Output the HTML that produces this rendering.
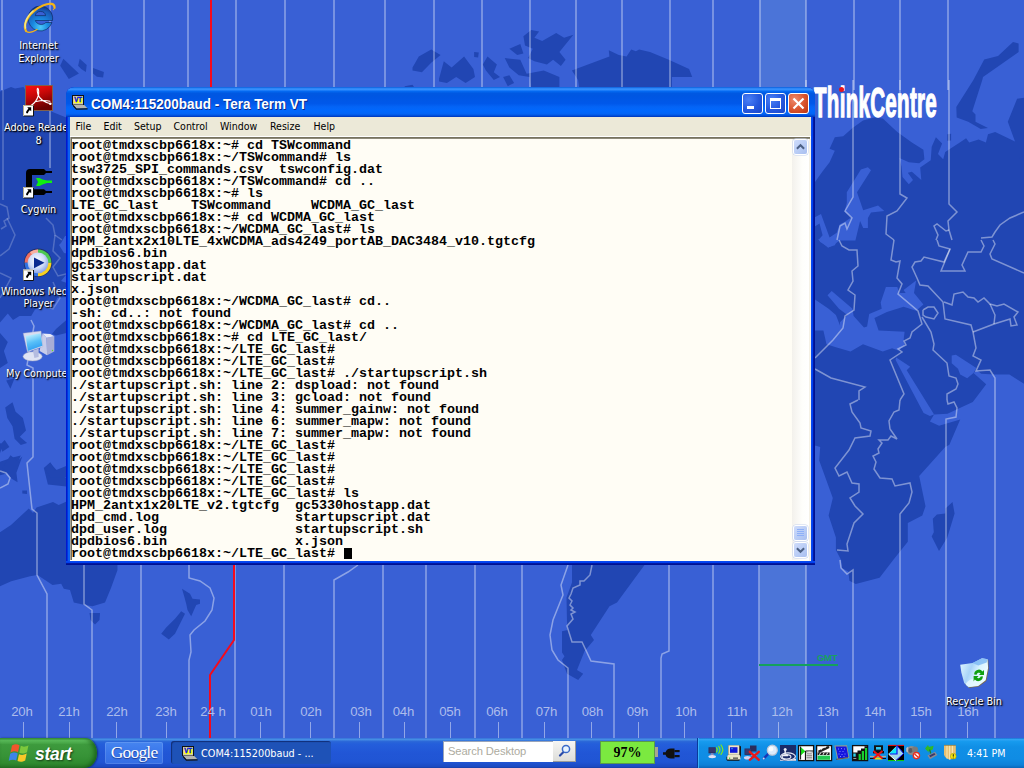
<!DOCTYPE html>
<html lang="en"><head><meta charset="utf-8"><title>COM4:115200baud - Tera Term VT</title>
<style>
html,body{margin:0;padding:0}
body{width:1024px;height:768px;overflow:hidden;position:relative;background:#3960d5;font-family:"Liberation Sans","DejaVu Sans",sans-serif;font-size:11px}
#wall{position:absolute;left:0;top:0}
.abs{position:absolute}
/* hour labels */
.hr{position:absolute;top:703px;width:40px;text-align:center;font-size:13.2px;color:#adbcec;line-height:18px;letter-spacing:-0.1px}
.tick{position:absolute;top:722px;width:1px;height:16px;background:rgba(255,255,255,.45)}
#gmt{position:absolute;left:759px;top:664px;width:79px;height:2px;background:#14a05c}
#gmtt{position:absolute;left:817px;top:652px;font-size:9.5px;font-weight:bold;color:#18a060;line-height:12px;letter-spacing:-.3px}
/* desktop icons */
.dlabel{position:absolute;width:90px;text-align:center;color:#fff;font-family:"DejaVu Sans Condensed","Liberation Sans",sans-serif;font-size:10.8px;line-height:13px;text-shadow:1px 1px 1px #000,1px 1px 2px rgba(0,0,0,.8);white-space:nowrap}
/* logo */
#logo{position:absolute;left:814px;top:78px;color:#fff;font-weight:bold;font-size:43px;line-height:48px;transform-origin:0 0;transform:scaleX(.478);letter-spacing:.6px;-webkit-text-stroke:1.4px #fff;white-space:nowrap}
#logodot{position:absolute;left:839px;top:87px;width:5px;height:5px;border-radius:3px;background:#e8141c}
/* window */
#win{position:absolute;left:66px;top:87px;width:749px;height:478px;background:#0a3cd8;border-radius:8px 8px 0 0;overflow:hidden}
#title{position:absolute;left:0;top:0;width:749px;height:30px;background:linear-gradient(#0a5ad6 0,#1e78f0 3%,#3c96ff 7%,#2080fa 11%,#0468f0 15%,#0058e2 21%,#0056e2 30%,#0058ea 55%,#0464f6 66%,#0068fe 80%,#0464f4 90%,#0050dc 95%,#0034b8 100%);border-radius:8px 8px 0 0}
#ttext{position:absolute;left:25px;top:8px;color:#fff;font-weight:bold;font-size:14.5px;line-height:18px;text-shadow:1px 1px 0 #0a2a8c;white-space:nowrap;transform-origin:0 0;transform:scaleX(.93)}
.tb{position:absolute;top:6px;width:21px;height:21px;border-radius:3px;box-sizing:border-box;border:1px solid #fff}
.tb.b{background:radial-gradient(circle at 30% 30%,#4a7ff6 0,#2558de 55%,#1c47c8 100%)}
.tb.r{background:radial-gradient(circle at 30% 30%,#ee8a6c 0,#d9532c 55%,#bb3310 100%)}
#lb,#rb,#bb{position:absolute}
#lb{background:linear-gradient(90deg,#0019cf 0,#0019cf 30%,#0a5ff0 50%,#0a5ff0 100%)}
#rb{background:linear-gradient(90deg,#0a50f0 0,#003cf0 45%,#001496 65%,#001090 100%)}
#lb{left:0;top:30px;width:4px;height:448px}
#rb{left:745px;top:30px;width:4px;height:448px}
#bb{left:0;top:474px;width:749px;height:4px;background:linear-gradient(#0a50f0 0,#003cf0 45%,#001496 65%,#001090 100%)}
#menu{position:absolute;left:4px;top:30px;width:741px;height:19px;background:#ece9d8}
#menu span{position:absolute;top:3px;font-family:"DejaVu Sans Condensed","Liberation Sans",sans-serif;font-size:10.5px;line-height:13px;color:#000}
#client{position:absolute;left:4px;top:49px;width:741px;height:425px;background:#fffdf5}
#sunk{position:absolute;left:4px;top:49px;width:740px;height:3px;background:linear-gradient(#fff 0,#fff 33.300%,#77735f 33.300%,#77735f 66.600%,#8e8a7a 66.600%,#8e8a7a 100%)}
#sunkl{position:absolute;left:4px;top:50px;width:2px;height:423px;background:linear-gradient(90deg,#aca899 0,#aca899 50%,#716f64 50%,#716f64 100%)}
#term{position:absolute;left:5px;top:53px;font-family:"Liberation Mono","DejaVu Sans Mono",monospace;font-weight:bold;font-size:13.33px;line-height:12px;color:#000;white-space:pre}
.tl{height:12px;white-space:pre}
.cur{display:inline-block;width:8px;height:11px;background:#000;vertical-align:top;margin-top:0;margin-left:1px}
#sb{position:absolute;left:726px;top:52px;width:17px;height:421px;background:linear-gradient(90deg,#f3f1ec,#fefefb 60%,#fff)}
#sbr{position:absolute;left:743px;top:52px;width:2px;height:422px;background:#f5f1e6}
.sbtn{position:absolute;left:2px;width:13px;height:14px;border-radius:2px;background:linear-gradient(135deg,#cfdcfb,#b7cbf5 60%,#a9bff0);box-shadow:0 0 0 1px #fff, 0 0 0 1.5px #c5d2ee}
/* taskbar */
#task{position:absolute;left:0;top:738px;width:1024px;height:30px;background:linear-gradient(#3168d5 0,#4993e6 4%,#2a66d8 12%,#245edb 20%,#2156d6 50%,#2055d4 80%,#1c4ac2 95%,#173ea5 100%)}
#start{position:absolute;left:0;top:0;width:97px;height:30px;border-radius:0 12px 12px 0/0 15px 15px 0;background:linear-gradient(#3f9d3f 0,#5cbf5c 8%,#3d9a3d 22%,#379337 60%,#2f8a2f 85%,#2a7a2a 100%);box-shadow:inset -3px 0 4px rgba(0,60,0,.5), 1px 0 2px rgba(0,0,40,.5)}
#starttxt{position:absolute;left:35px;top:4px;color:#fff;font-style:italic;font-weight:bold;font-size:17.5px;line-height:24px;text-shadow:1px 1px 2px rgba(0,0,0,.6);letter-spacing:-.3px}
#goog{position:absolute;left:105px;top:4px;width:58px;height:22px;border-radius:2px;background:linear-gradient(#4685f0,#3a76ea 50%,#356ee4);box-shadow:inset 0 0 0 1px rgba(255,255,255,.12)}
#goog span{position:absolute;left:0;top:0;width:58px;text-align:center;color:#fff;font-family:"Liberation Serif","DejaVu Serif",serif;font-size:17.5px;line-height:21px;letter-spacing:-.8px;text-shadow:0 1px 1px rgba(0,0,60,.5)}
#tbtn{position:absolute;left:171px;top:3px;width:160px;height:23px;border-radius:3px;background:#1e52b7;box-shadow:inset 1px 1px 1px rgba(0,0,40,.45)}
#tbtn span{position:absolute;left:30px;top:6px;color:#fff;font-family:"DejaVu Sans Condensed","Liberation Sans",sans-serif;font-size:10.8px;line-height:13px;white-space:nowrap}
#srch{position:absolute;left:443px;top:3px;width:110px;height:21px;background:#fff;box-shadow:inset 1px 1px 0 #9aa4b8}
#srch span{position:absolute;left:5px;top:3px;color:#adaba0;font-size:11.2px;line-height:14px;letter-spacing:-.1px}
#sbut{position:absolute;left:553px;top:3px;width:23px;height:21px;background:linear-gradient(#f6f6f4,#dcdcd8);box-shadow:inset -1px -1px 0 #9a9a98}
#batt{position:absolute;left:600px;top:3px;width:55px;height:23px;background:#7be940;box-shadow:inset 0 0 0 1px #5a9a4a}
#batt span{position:absolute;left:0;top:2px;width:55px;text-align:center;color:#000;font-family:"Liberation Serif",serif;font-weight:bold;font-size:14px;line-height:19px}
#bnub{position:absolute;left:655px;top:9px;width:3px;height:10px;background:#a8a690}
#tray{position:absolute;left:697px;top:0;width:327px;height:30px;background:linear-gradient(#1a6fd2 0,#2ea4f4 5%,#169aee 12%,#108fe6 30%,#0f8ce4 70%,#0d80d8 90%,#0a66b8 100%);box-shadow:inset 1px 0 0 #0a3a9a, inset 2px 0 0 #3ab0f8}
#clock{position:absolute;left:270px;top:9px;color:#fff;font-family:"DejaVu Sans Condensed","Liberation Sans",sans-serif;font-size:10.6px;line-height:13px;white-space:nowrap}
.ti{position:absolute;top:7px;width:16px;height:16px}

.tb i,.sbtn i{position:absolute;display:block;box-sizing:border-box}

</style></head>
<body>
<svg id="wall" width="1024" height="768" viewBox="0 0 1024 768">
<rect width="1024" height="768" fill="#3960d5"/>
<rect x="759.5" y="0" width="46.5" height="740" fill="#4b74d8"/>
<polygon points="790,182 815,182.1 822.3,171.7 829.6,162.3 834.8,150.8 829.6,148.8 834.8,137.3 843.2,136.2 852.5,127.9 863,120.6 874.4,117.5 882.8,118.5 897.3,132.1 911.9,142.5 923.4,149.8 924.4,159.2 919.2,163.3 908.8,162.3 899.4,158.1 901.5,166.5 902.5,176.9 908.8,184.2 913,180 907.8,172.7 911.9,171.7 921.3,180 920.2,167.5 930.7,160.2 931.7,146.7 935.9,137.3 942.1,143.5 938,154 943.2,159.2 945.2,151.9 959.8,142.5 966.1,138.3 969.2,142.5 978.6,139.4 985.9,142.5 988,134.2 995.2,132.1 1015,141.5 1007.8,121.7 1017.1,98.8 1024.4,97.7 1026,385 1009.4,374.5 994.6,374.5 981.2,373.8 977,370.2 973.5,373 986.2,384.3 972.8,401.9 956.6,409.6 947.5,413.8 934.1,414.5 929.9,421.6 939.1,425.8 960.2,419.5 949.4,444.8 945.2,446.9 919.2,476 925.5,506.2 922.3,515.6 907.8,522.9 907.8,541.7 893.2,560 879.6,577.7 855.7,584 849.4,580.8 848.4,571.5 842.1,568.3 841.1,560 835.9,550 835.9,537.5 828.6,515.6 832.8,497.9 819.2,460.4 820.2,446.9 816.1,445.8 790,446" fill="#2146b3" />
<polygon points="984.2,59.6 998,55.9 1013,42.1 1018.6,43.4 1018.6,52.1 983,77.1 982.3,80 972.3,111.2 975.5,114.4 975.5,121.7 988,127.9 980.7,129 968.2,121.7 956.7,117.5 956.3,107.1 973.4,80" fill="#2146b3" />
<polygon points="947.3,134.2 951.1,133.8 951.1,140.4 947.3,140.8" fill="#2146b3" />
<polygon points="1019.2,158.1 1024.4,155 1024.4,161.7" fill="#2146b3" />
<polygon points="952.5,502.1 954.6,513.5 947.3,537.5 939,551 931.7,536.5 933.8,532.3 932.8,518.8 936.9,514.6 945.2,513.5 945.7,508.3" fill="#2146b3" />
<polygon points="572,560 648.2,560 617,602.5 609.5,606.2 590.8,635 594,640 584.5,651.2 577,670 583.2,673.8 578.2,680 567,673.8 562,660 564.5,656.2 562,652.5 562,631.2 567.5,630 567,622.5 566.5,597.5 572,582.5" fill="#2146b3" />
<polygon points="-1,533 11,525 28.8,508.6 33,513 36.5,507.5 53,502 58.7,505 70,500 117,540 117.5,570 111.2,587.5 105,602.5 92.5,606.2 85,605 73.8,602.5 70,590 63.8,588.8 61.2,583.8 52.5,585 37.5,575 30,576.2 11.2,581.2 -1.2,586.8" fill="#2146b3" />
<polygon points="89.5,613 100,613 99.5,620 95,624.5 90.5,620" fill="#2146b3" />
<polygon points="182,588.8 190,593.8 192.5,598.8 200,599.5 200,603.8 196.2,605 191.2,616.2 187.5,610 186.2,603.8 184.5,597.5" fill="#2146b3" />
<polygon points="181.2,611.2 185,613.8 175,633.8 168.8,639.5 161.2,633.8 166.2,627.5 175,618.8" fill="#2146b3" />
<polygon points="860.9,169.5 867.9,167.2 871,170.3 857,192.2 863.2,210.2 878.1,205.5 884.3,210.9 871,212.5 867.9,218 867.9,228.1 863.2,228.1 860.1,221.1 855.4,240.6 839.8,240.6 832.8,245.3 828.1,247.7 818.7,239.8 822.6,235.2 819.5,223.4 814.8,226.6 814.8,217.2 821,214.1 829.6,237.5 836.7,232.8 839.8,224.2 844.5,221.9 851.5,217.2 844.5,211.7 846.8,203.1 846.8,192.2" fill="#3960d5" />
<polygon points="951.7,355.5 955.9,354.8 976.3,368.1 973.5,373 967.2,378.2 960.2,374.5 958,368.8 951.7,363.2" fill="#3960d5" />
<polygon points="896.2,357.6 910.2,366.7 906.7,370.2 934.1,414.5 929.9,415.9 923.6,413.1 895.5,359.7" fill="#3960d5" />
<polygon points="412.5,67.5 418.8,56.6 431.2,49.4 440.6,55 431.2,62.8 421.9,72.2 412.5,70.6" fill="#2146b3" />
<polygon points="439.1,78.4 443.8,61.2 451.6,67.5 464.1,56.6 473.4,69.1 475,76.9 465.6,83.1 456.2,76.9 446.9,83.1 439.1,81.6" fill="#2146b3" />
<polygon points="474.1,51.9 478.8,52.5 478.1,57.5 474.1,56.9" fill="#2146b3" />
<polygon points="482.8,64.4 487.5,56.6 496.9,64.4 493.8,72.2 500,76.9 493.8,80 485.9,70.6" fill="#2146b3" />
<polygon points="503.1,76.9 509.4,75.3 514.1,83.1 507.8,86.2" fill="#2146b3" />
<polygon points="509.4,48.8 520.3,44.1 523.4,53.4 517.2,55" fill="#2146b3" />
<polygon points="523.4,36.2 531.2,30 539.1,31.6 534.4,37.8 542.2,40.9 556.2,33.1 564.1,37.8 573.4,34.7 559.4,51.9 565.6,59.7 560.9,65.9 553.1,59.7 546.9,64.4 534.4,61.2 528.1,58.1 532.8,48.8 525,45.6" fill="#2146b3" />
<polygon points="504.7,58.1 520.3,59.7 526.6,73.8 543.8,70.6 559.4,76.9 559.4,90.9 531.2,90.9 529.7,76.9 518.8,75.3 509.4,67.5" fill="#2146b3" />
<polygon points="571.9,70.6 609.4,56.6 608.8,50.3 618.8,55 626.6,56.6 631.2,49.4 635.9,51.2 639.1,49.4 650,51.9 668.8,59.7 689.1,69.1 692.2,76.9 671.9,76.9 671.9,90.9 579.7,90.9 578.1,80" fill="#2146b3" />
<polygon points="404.7,86.2 412.5,84.7 415.6,89.4 404.7,89.4" fill="#2146b3" />
<polygon points="60.2,65.8 63.3,58.8 78.9,73.6 68.8,79.1" fill="#2146b3" />
<polygon points="78.1,65.8 79.7,58.8 86.7,65 85.9,72 81.2,68.9" fill="#2146b3" />
<polygon points="93,68.1 103.9,72 103.1,77.5 96.9,76.7 93,73.6" fill="#2146b3" />
<polygon points="0,91.5 11,87 15,88.5 23.5,87 26,91.5 30,100 52.5,112 70,119 70,236 65,236 61,243 59,245 64,253 70,254 70,270 61,281 70,284 70,296.5 57.2,297.8 54.6,304.3 39,307 35,309.5 31.2,316 19.5,316 13,320 7.8,313.4 0,322.5" fill="#2146b3" />
<polygon points="70,320 66.4,320 56,329 52,334 56,335.5 66.4,333 70,333" fill="#2146b3" />
<polygon points="0,333 7.8,342 3.9,351 7.8,363 0,368" fill="#2146b3" />
<polygon points="6.2,380.4 14.6,378.3 10.4,388.8" fill="#2146b3" />
<polygon points="5.2,407.5 12.5,402.3 15.6,411.7 22.9,417.9 26,430.4 19.8,436.7 27.1,442.9 20.8,445 14.6,438.8 12.5,426.2 7.3,417.9" fill="#2146b3" />
<polygon points="0,461.7 12.5,457.5 20.8,455.4 14.6,470 4.2,474.2 0,475.2" fill="#2146b3" />
<polygon points="43.8,467.9 50,462.7 60.4,474.2 68.8,480 68.8,486.7 47.9,484.6" fill="#2146b3" />
<polygon points="0,442.9 3.1,445 0,453.3" fill="#2146b3" />
<polygon points="2.3,468.1 10.5,455.2 17.6,461.1 22.3,456.4 16.4,472.8 17.6,482.2 11.7,478.7 7,472.8" fill="#2146b3" />
<polygon points="44.5,468.1 50.4,462.3 55.1,470.5 66.8,465.8 70.3,477.5 50.4,477.5" fill="#2146b3" />
<polygon points="22.3,490.4 27,490.4 27,493.9 22.3,493.4" fill="#2146b3" />
<polygon points="0,444.7 4.7,440 9.4,447 2.3,451.7" fill="#2146b3" />
<polygon points="815,299.4 828.6,308.8 835.9,315 840,325.4 840,322.3 847.3,315 839,308.8 827.5,295.2 831.7,291 852.5,308.8 853.6,316 864,327.5 867.1,326.5 869.2,314 881.7,308.8 880.7,302.5 885.9,286.9 897.3,286.9 899.4,293.1 905.7,293.1 903.6,290 916.1,280.6 914,293.1 923.4,304.6 916.1,310.8 903.6,306.7 886.9,311.9 874.4,318.1 878.6,330.6 904.6,331.7 903.6,340 904.6,345.2 898.4,350.4 892.1,348.3 882.8,351.5 863,344.2 850.5,351.5 835.9,347.3 826.5,344.2 823.4,330.6 815,330.6" fill="#3960d5" />
<polygon points="818.2,239 838,239 834.8,245.2 828.6,247.3 820.2,242.1" fill="#3960d5" />
<polyline points="2,0 2,90" fill="none" stroke="#fff" stroke-opacity="0.42" stroke-width="1.5" />
<polyline points="50,0 50,90" fill="none" stroke="#fff" stroke-opacity="0.42" stroke-width="1.5" />
<polyline points="92,0 92,90" fill="none" stroke="#fff" stroke-opacity="0.42" stroke-width="1.5" />
<polyline points="144,0 144,90" fill="none" stroke="#fff" stroke-opacity="0.42" stroke-width="1.5" />
<polyline points="188,0 188,90" fill="none" stroke="#fff" stroke-opacity="0.42" stroke-width="1.5" />
<polyline points="236,0 236,90" fill="none" stroke="#fff" stroke-opacity="0.42" stroke-width="1.5" />
<polyline points="285,0 285,90" fill="none" stroke="#fff" stroke-opacity="0.42" stroke-width="1.5" />
<polyline points="334,0 334,90" fill="none" stroke="#fff" stroke-opacity="0.42" stroke-width="1.5" />
<polyline points="385,0 385,90" fill="none" stroke="#fff" stroke-opacity="0.42" stroke-width="1.5" />
<polyline points="434,0 434,90" fill="none" stroke="#fff" stroke-opacity="0.42" stroke-width="1.5" />
<polyline points="482,0 482,90" fill="none" stroke="#fff" stroke-opacity="0.42" stroke-width="1.5" />
<polyline points="530,0 530,90" fill="none" stroke="#fff" stroke-opacity="0.42" stroke-width="1.5" />
<polyline points="576,0 576,90" fill="none" stroke="#fff" stroke-opacity="0.42" stroke-width="1.5" />
<polyline points="622,0 622,90" fill="none" stroke="#fff" stroke-opacity="0.42" stroke-width="1.5" />
<polyline points="670,0 670,90" fill="none" stroke="#fff" stroke-opacity="0.42" stroke-width="1.5" />
<polyline points="713,0 713,90" fill="none" stroke="#fff" stroke-opacity="0.42" stroke-width="1.5" />
<polyline points="760,0 760,90" fill="none" stroke="#fff" stroke-opacity="0.42" stroke-width="1.5" />
<polyline points="806,0 806,90" fill="none" stroke="#fff" stroke-opacity="0.42" stroke-width="1.5" />
<polyline points="854,0 854,90" fill="none" stroke="#fff" stroke-opacity="0.42" stroke-width="1.5" />
<polyline points="900,0 900,90" fill="none" stroke="#fff" stroke-opacity="0.42" stroke-width="1.5" />
<polyline points="948,0 948,90" fill="none" stroke="#fff" stroke-opacity="0.42" stroke-width="1.5" />
<polyline points="50,90 50,168" fill="none" stroke="#fff" stroke-opacity="0.42" stroke-width="1.5" />
<polyline points="84,560 84,604 92,610 92,738" fill="none" stroke="#fff" stroke-opacity="0.42" stroke-width="1.5" />
<polyline points="141,565 141,738" fill="none" stroke="#fff" stroke-opacity="0.42" stroke-width="1.5" />
<polyline points="189,565 189,578 200,581 210,588 214,598 212,610 205,621 194,630 190,635 191,652 189,660 189,738" fill="none" stroke="#fff" stroke-opacity="0.42" stroke-width="1.5" />
<polyline points="235,565 235,738" fill="none" stroke="#fff" stroke-opacity="0.42" stroke-width="1.5" />
<polyline points="284,565 284,738" fill="none" stroke="#fff" stroke-opacity="0.42" stroke-width="1.5" />
<polyline points="358,565 348,572 334,580 334,738" fill="none" stroke="#fff" stroke-opacity="0.42" stroke-width="1.5" />
<polyline points="383,565 383,738" fill="none" stroke="#fff" stroke-opacity="0.42" stroke-width="1.5" />
<polyline points="426,565 426,738" fill="none" stroke="#fff" stroke-opacity="0.42" stroke-width="1.5" />
<polyline points="475,565 475,738" fill="none" stroke="#fff" stroke-opacity="0.42" stroke-width="1.5" />
<polyline points="522,565 522,738" fill="none" stroke="#fff" stroke-opacity="0.42" stroke-width="1.5" />
<polyline points="568,565 561,585 563,595 553,620 550,635 552,650 558,660 568,668 568,738" fill="none" stroke="#fff" stroke-opacity="0.42" stroke-width="1.5" />
<polyline points="592,565 590,575 584,581 580,581 580,585 573,588 571,594 569,598 572,601 570,605 573,608 571,610 575,612 571,614 573,619 567,626 572,642 582,642 591,661 614,664 614,738" fill="none" stroke="#fff" stroke-opacity="0.42" stroke-width="1.5" />
<polyline points="669,565 669,651 662,654 661,658 661,738" fill="none" stroke="#fff" stroke-opacity="0.42" stroke-width="1.5" />
<polyline points="713,565 713,738" fill="none" stroke="#fff" stroke-opacity="0.42" stroke-width="1.5" />
<polyline points="759,565 759,738" fill="none" stroke="#fff" stroke-opacity="0.42" stroke-width="1.5" />
<polyline points="806,565 806,738" fill="none" stroke="#fff" stroke-opacity="0.42" stroke-width="1.5" />
<polyline points="840,560 841,568 847,574 853,570 853,738" fill="none" stroke="#fff" stroke-opacity="0.42" stroke-width="1.5" />
<polyline points="900,400 899,410 894,412 889,421 890,429 897,439 891,436 888,440 879,440 882,443 878,449 879,453 873,456 876,462 874,469 880,478 892,479 895,486 910,483 912,492 909,503 900,514 900,560" fill="none" stroke="#fff" stroke-opacity="0.42" stroke-width="1.5" />
<polyline points="900,560 900,738" fill="none" stroke="#fff" stroke-opacity="0.42" stroke-width="1.5" />
<polyline points="858,400 850,404 852,412 860,423 861,428 871,431 870,436 855,438 849,450 835,468 839,476 847,472 852,483 859,484 859,492 850,498 855,506 863,514 854,523 847,544 848,551 837,550" fill="none" stroke="#fff" stroke-opacity="0.42" stroke-width="1.5" />
<polyline points="947,400 948,404 954,402 957,408 956,417 946,419 946,560" fill="none" stroke="#fff" stroke-opacity="0.42" stroke-width="1.5" />
<polyline points="946,560 946,738" fill="none" stroke="#fff" stroke-opacity="0.42" stroke-width="1.5" />
<polyline points="995,400 995,560" fill="none" stroke="#fff" stroke-opacity="0.42" stroke-width="1.5" />
<polyline points="995,560 995,738" fill="none" stroke="#fff" stroke-opacity="0.42" stroke-width="1.5" />
<polyline points="995,400 995,378 990,370 976,371 981,360 973,356 976,348 973,332 971,325 945,319 943,302 928,286 920,285 917,278 912,267 915,262 921,261 924,257 944,262 950,249 939,246 937,240" fill="none" stroke="#fff" stroke-opacity="0.42" stroke-width="1.5" />
<polyline points="973,332 994,324 1010,319 1011,326 1017,325 1014,317 1018,312 1004,304 997,306 990,304 984,298 978,302 974,298 968,297 963,292 954,294 952,305 944,302" fill="none" stroke="#fff" stroke-opacity="0.42" stroke-width="1.5" />
<polyline points="990,304 995,315 994,324" fill="none" stroke="#fff" stroke-opacity="0.42" stroke-width="1.5" />
<polyline points="950,249 941,271 965,271 962,265 968,252 981,252 984,246 981,240" fill="none" stroke="#fff" stroke-opacity="0.42" stroke-width="1.5" />
<polyline points="993,240 995,244 990,254 992,259 1024,273" fill="none" stroke="#fff" stroke-opacity="0.42" stroke-width="1.5" />
<polyline points="839,240 842,246 849,250 857,250 858,266 852,271 853,281 848,290 855,295 854,310 845,316 843,328 833,340 815,358" fill="none" stroke="#fff" stroke-opacity="0.42" stroke-width="1.5" />
<polyline points="815,369 831,378 865,387 859,391 859,400" fill="none" stroke="#fff" stroke-opacity="0.42" stroke-width="1.5" />
<polyline points="894,240 891,260 896,262 900,261 897,278 902,284 898,294 918,311 922,324 912,332 910,338 904,341 906,345 898,349 902,352 890,360 904,394 900,400" fill="none" stroke="#fff" stroke-opacity="0.42" stroke-width="1.5" />
<polyline points="922,317 931,332 934,344 933,350 947,363 949,376 956,378 958,384 956,389 947,394 947,400" fill="none" stroke="#fff" stroke-opacity="0.42" stroke-width="1.5" />
<polyline points="923,310 928,307 934,307 938,313 934,319 926,317 923,315 923,310" fill="none" stroke="#fff" stroke-opacity="0.42" stroke-width="1.5" />
<polyline points="853,80 853,197 845,211 852,218 847,229 845,223 840,226 837,240" fill="none" stroke="#fff" stroke-opacity="0.42" stroke-width="1.5" />
<polyline points="900,80 900,194 907,198 897,211 887,216 886,234 894,240" fill="none" stroke="#fff" stroke-opacity="0.42" stroke-width="1.5" />
<polyline points="949,80 949,204 957,212 948,221 949,230 952,240" fill="none" stroke="#fff" stroke-opacity="0.42" stroke-width="1.5" />
<polyline points="949,230 946,231 937,224 934,226 938,235 936,240" fill="none" stroke="#fff" stroke-opacity="0.42" stroke-width="1.5" />
<polyline points="1024,212 1010,218 1000,225 995,232 992,237 981,238" fill="none" stroke="#fff" stroke-opacity="0.42" stroke-width="1.5" />
<polyline points="806,80 806,90" fill="none" stroke="#fff" stroke-opacity="0.42" stroke-width="1.5" />
<polyline points="3,90 3,200" fill="none" stroke="#fff" stroke-opacity="0.25" stroke-width="1.5" />
<polyline points="31,320 34,326 27,365 33,368 33,456 33,457 27,463 32,509 37,513 37,575 47,594 47,738" fill="none" stroke="#fff" stroke-opacity="0.42" stroke-width="1.5" />
<polyline points="0,471 6,473 10,478 8,484 0,488" fill="none" stroke="#fff" stroke-opacity="0.42" stroke-width="1.5" />
<polyline points="0,204 7,207 9,218 4,221 6,226 1,229" fill="none" stroke="#fff" stroke-opacity="0.22" stroke-width="1.5" />
<polyline points="7,218 15,235 9,249 0,256" fill="none" stroke="#fff" stroke-opacity="0.22" stroke-width="1.5" />
<polyline points="46,218 53,225 55,235 62,240" fill="none" stroke="#fff" stroke-opacity="0.22" stroke-width="1.5" />
<polyline points="55,235 53,251 60,258 53,267 58,276 70,273" fill="none" stroke="#fff" stroke-opacity="0.22" stroke-width="1.5" />
<polyline points="53,282 60,298 53,309 46,307" fill="none" stroke="#fff" stroke-opacity="0.22" stroke-width="1.5" />
<polyline points="0,273 11,278 4,291 0,298" fill="none" stroke="#fff" stroke-opacity="0.22" stroke-width="1.5" />
<polyline points="211,0 211,90" fill="none" stroke="#f50a1c" stroke-width="2"/><polyline points="234,560 234,640 210,675 210,738" fill="none" stroke="#f50a1c" stroke-width="2"/>
</svg>
<div class="hr" style="left:2px">20h</div><div class="tick" style="left:23px"></div><div class="hr" style="left:49px">21h</div><div class="tick" style="left:69px"></div><div class="hr" style="left:97px">22h</div><div class="tick" style="left:116px"></div><div class="hr" style="left:146px">23h</div><div class="tick" style="left:166px"></div><div class="hr" style="left:193px">24 h</div><div class="hr" style="left:241px">01h</div><div class="tick" style="left:260px"></div><div class="hr" style="left:291px">02h</div><div class="tick" style="left:310px"></div><div class="hr" style="left:341px">03h</div><div class="tick" style="left:359px"></div><div class="hr" style="left:383.5px">04h</div><div class="tick" style="left:404px"></div><div class="hr" style="left:430px">05h</div><div class="tick" style="left:450px"></div><div class="hr" style="left:477px">06h</div><div class="tick" style="left:498px"></div><div class="hr" style="left:526.5px">07h</div><div class="tick" style="left:544px"></div><div class="hr" style="left:572.5px">08h</div><div class="tick" style="left:591px"></div><div class="hr" style="left:617.5px">09h</div><div class="tick" style="left:638px"></div><div class="hr" style="left:666px">10h</div><div class="tick" style="left:684px"></div><div class="hr" style="left:717px">11h</div><div class="tick" style="left:731px"></div><div class="hr" style="left:762px">12h</div><div class="tick" style="left:778px"></div><div class="hr" style="left:808px">13h</div><div class="tick" style="left:826px"></div><div class="hr" style="left:855px">14h</div><div class="tick" style="left:873px"></div><div class="hr" style="left:901px">15h</div><div class="tick" style="left:920px"></div><div class="hr" style="left:948px">16h</div><div class="tick" style="left:967px"></div>
<div id="gmt"></div><div id="gmtt">GMT</div>
<div id="logo">ThinkCentre</div><div id="logodot"></div>

<!-- desktop icons -->
<svg class="abs" style="left:22px;top:0" width="40" height="36" viewBox="22 0 40 36">
<defs><radialGradient id="ieg" cx="0.5" cy="0.85" r="0.9"><stop offset="0" stop-color="#4cc8f8"/><stop offset="0.35" stop-color="#1a8ae0"/><stop offset="0.75" stop-color="#1a5ab8"/><stop offset="1" stop-color="#0a2a70"/></radialGradient></defs>
<path fill="url(#ieg)" fill-rule="evenodd" stroke="#0a2050" stroke-width="0.6" d="M40.3 6A12.300 12.500 0 1 0 52 22.500H45.800A6.200 5.800 0 0 1 35.300 20.500H52.500A12.300 12.500 0 0 0 40.300 6ZM35.300 15.600A5.200 4.800 0 0 1 45.600 15.600Z"/>
<path d="M26 31C22 24 30 11 43 5.5 50 2.5 55 3.5 54.5 8" fill="none" stroke="#f4b418" stroke-width="2.2" stroke-linecap="round"/>
<path d="M25.5 28C24 22 28 15 33 11" fill="none" stroke="#f8e880" stroke-width="1.6" stroke-linecap="round"/>
<path d="M26.5 31.5C29 33.5 33 32 37 29.5" fill="none" stroke="#f4b418" stroke-width="1.2" stroke-linecap="round"/>
<circle cx="53.5" cy="9.6" r="0.7" fill="#f4b418"/>
</svg>
<svg class="abs" style="left:22px;top:84px" width="34" height="34" viewBox="22 84 34 34">
<defs><linearGradient id="adg" x1="0" y1="0" x2="0.35" y2="1"><stop offset="0" stop-color="#ff1010"/><stop offset="0.45" stop-color="#c80808"/><stop offset="1" stop-color="#6a0000"/></linearGradient></defs>
<rect x="25.5" y="85.5" width="27" height="25" fill="url(#adg)" stroke="#80604c" stroke-width="1"/>
<path d="M31 105.5C35 103 37.5 98.5 38.3 95.5 39 93 38.8 89 37.8 88.3 37 88 37 91 38 94.5 39.5 99 44 102 50.5 103.8M36.5 101.5C40 100.6 46 100.4 50 101.2" fill="none" stroke="#fff" stroke-width="1.1" stroke-linecap="round"/>
<circle cx="50.3" cy="103.8" r="1.3" fill="#fff"/>
<g transform="translate(23,105)"><rect x="0.5" y="0.5" width="10" height="10" fill="#fff" stroke="#000" stroke-width="0"/><path d="M0 0H10.5V11H0Z" fill="#fff"/><path d="M10.5 0.5V11H0.5" fill="none" stroke="#111" stroke-width="1"/><path d="M0.5 10.5V0.5H10" fill="none" stroke="#b8b090" stroke-width="1"/><path d="M4.2 2.3H8.2V6.3L6.9 5 5.2 6.9 5 8 4 8.5 3 7.4 3.4 6.2 5.4 3.6Z" fill="#000"/></g></svg>
<svg class="abs" style="left:22px;top:166px" width="34" height="34" viewBox="22 166 34 34">
<path d="M52 171H46L44 169H30Q26 169 26 173V191Q26 195 30 195H44L46 193H52V191H46L44 189.3H32V175H44L46 173H52Z" fill="#000"/>
<path d="M36 178H39.5L42.5 179.5 47 180.5H52V183H47L42.5 184.5 39.5 186H36L38 182Z" fill="#10f010"/>
<g transform="translate(23,187)"><rect x="0.5" y="0.5" width="10" height="10" fill="#fff" stroke="#000" stroke-width="0"/><path d="M0 0H10.5V11H0Z" fill="#fff"/><path d="M10.5 0.5V11H0.5" fill="none" stroke="#111" stroke-width="1"/><path d="M0.5 10.5V0.5H10" fill="none" stroke="#b8b090" stroke-width="1"/><path d="M4.2 2.3H8.2V6.3L6.9 5 5.2 6.9 5 8 4 8.5 3 7.4 3.4 6.2 5.4 3.6Z" fill="#000"/></g></svg>
<svg class="abs" style="left:20px;top:246px" width="36" height="36" viewBox="20 246 36 36">
<defs><radialGradient id="wmg" cx="0.45" cy="0.4" r="0.6"><stop offset="0" stop-color="#ffffff"/><stop offset="0.6" stop-color="#d0dcf8"/><stop offset="1" stop-color="#8aa4e8"/></radialGradient></defs>
<circle cx="38" cy="262.8" r="14.2" fill="#20306a"/>
<path d="M38 249.4A13.4 13.4 0 0 0 24.6 262.8H38Z" fill="#f07060"/>
<path d="M38 249.4A13.4 13.4 0 0 1 51.4 262.8H38Z" fill="#4cc850"/>
<path d="M51.4 262.8A13.4 13.4 0 0 1 38 276.2V262.8Z" fill="#f8d020"/>
<path d="M24.6 262.8A13.4 13.4 0 0 0 38 276.2V262.8Z" fill="#3070e0"/>
<path d="M38 249.4A13.4 13.4 0 0 0 30 252 L38 262.8Z" fill="#f8b0a0"/>
<circle cx="38" cy="262.8" r="10.4" fill="url(#wmg)"/>
<path d="M34 257.5L44.5 262.8 34 268.2Z" fill="#0a2a90"/>
<g transform="translate(23,269.5)"><rect x="0.5" y="0.5" width="10" height="10" fill="#fff" stroke="#000" stroke-width="0"/><path d="M0 0H10.5V11H0Z" fill="#fff"/><path d="M10.5 0.5V11H0.5" fill="none" stroke="#111" stroke-width="1"/><path d="M0.5 10.5V0.5H10" fill="none" stroke="#b8b090" stroke-width="1"/><path d="M4.2 2.3H8.2V6.3L6.9 5 5.2 6.9 5 8 4 8.5 3 7.4 3.4 6.2 5.4 3.6Z" fill="#000"/></g></svg>
<svg class="abs" style="left:20px;top:328px" width="38" height="38" viewBox="20 328 38 38">
<defs><linearGradient id="mcg" x1="0.3" y1="0" x2="0.6" y2="1"><stop offset="0" stop-color="#c8f4ff"/><stop offset="0.5" stop-color="#58c0f8"/><stop offset="1" stop-color="#2898f0"/></linearGradient></defs>
<ellipse cx="32.6" cy="356.4" rx="9.6" ry="4.6" fill="#dfe4f4" stroke="#9aa0c0" stroke-width="0.5"/>
<polygon points="33.0,350.5 38.6,348.6 38.6,357.1 34.4,358.0" fill="#b4bce0"/>
<polygon points="42.4,333.6 46.6,337.8 47.1,355.2 39.6,351.0 41.4,342.1" fill="#c8cdea"/>
<polygon points="46.6,337.8 54.3,336.2 54.3,351.4 47.1,355.2" fill="#a8add6"/>
<polygon points="42.4,333.6 50.3,334.1 54.3,336.2 46.6,337.8" fill="#e8eaf8"/>
<polygon points="23.2,333.2 41.0,331.0 42.8,346.7 27.4,351.9" fill="#d8dcf0" stroke="#a0a4c8" stroke-width="0.4"/>
<polygon points="25.7,336.0 40.5,333.2 42.4,345.8 27.8,351.0" fill="url(#mcg)"/>
<circle cx="52.5" cy="350.5" r="0.7" fill="#60e020"/>
</svg>
<svg class="abs" style="left:956px;top:654px" width="36" height="36" viewBox="956 654 36 36">
<defs><linearGradient id="rbg" x1="0" y1="0" x2="1" y2="0.4"><stop offset="0" stop-color="#e8fbff"/><stop offset="0.45" stop-color="#a8d4f8"/><stop offset="0.7" stop-color="#d8f4ff"/><stop offset="1" stop-color="#eefcff"/></linearGradient></defs>
<polygon points="960.2,664.8 972.6,662.9 982.0,658.2 987.6,659.2 988.1,668.1 985.7,680.2 978.2,685.9 968.4,687.3 964.2,683.1 961.4,672.7" fill="#7a6a50" transform="translate(0.7,0.7)"/>
<polygon points="960.2,664.8 972.6,662.9 982.0,658.2 987.6,659.2 988.1,668.1 985.7,680.2 978.2,685.9 968.4,687.3 964.2,683.1 961.4,672.7" fill="url(#rbg)"/>
<polygon points="972.6,662.9 982.0,658.2 987.6,659.2 986.7,662.4 978.2,665.5" fill="#7ab8f4" opacity="0.8"/>
<ellipse cx="974.5" cy="682" rx="9" ry="3.6" transform="rotate(-18 974.5 682)" fill="#e4f8ff" opacity="0.85"/>
<path d="M974.2 674.5A4.6 4.6 0 0 1 982.5 671.5L984 670V675H979L980.6 673.3A2.4 2.4 0 0 0 976.6 674.8ZM982.8 676.2A4.6 4.6 0 0 1 974.8 679.6L973.6 681.5V676H978.6L977 677.8A2.4 2.4 0 0 0 980.6 676.4Z" fill="#10a010"/>
</svg>
<div class="dlabel" style="left:-6.5px;top:39px">Internet<br>Explorer</div>
<div class="dlabel" style="left:4px;top:121px;text-align:left">Adobe Reader</div>
<div class="dlabel" style="left:-6.5px;top:134px">8</div>
<div class="dlabel" style="left:-6.5px;top:203px">Cygwin</div>
<div class="dlabel" style="left:1px;top:285px;text-align:left">Windows Media</div>
<div class="dlabel" style="left:-6.5px;top:297px">Player</div>
<div class="dlabel" style="left:6px;top:367px;text-align:left">My Computer</div>
<div class="dlabel" style="left:929px;top:695px">Recycle Bin</div>

<!-- window -->
<div id="win">
  <div id="title"><svg class="abs" style="left:6px;top:8px" width="17" height="16" viewBox="0 0 17 16"><rect x="0" y="0" width="12" height="10" fill="#111"/><rect x="1" y="1" width="10" height="8.5" fill="#c8c8c0"/><rect x="1.8" y="1.8" width="8.4" height="6.4" fill="#ffff10"/><text x="6" y="7" font-family="Liberation Sans,sans-serif" font-weight="bold" font-size="6.500" fill="#1018e8" stroke="#1018e8" stroke-width=".5" text-anchor="middle" textLength="7.600" lengthAdjust="spacingAndGlyphs">VT</text><polygon points="1.2,10 12.3,10 15.4,13.3 4.6,13.6" fill="#b4b4b0"/><polyline points="1,10.3 4.4,14.2 15.6,13.9" fill="none" stroke="#111" stroke-width="1.2"/></svg><div id="ttext">COM4:115200baud - Tera Term VT</div>
    <div class="tb b" style="left:676px"><i style="left:4px;top:12px;width:7px;height:3px;background:#fff"></i></div>
    <div class="tb b" style="left:699px"><i style="left:4px;top:4px;width:11px;height:11px;border:1px solid #fff;border-top-width:3px"></i></div>
    <div class="tb r" style="left:722px"><svg class="abs" style="left:0;top:0" width="19" height="19" viewBox="0 0 19 19"><path d="M4.500 4.500l10 10M14.500 4.500l-10 10" stroke="#fff" stroke-width="2.200"/></svg></div>
  </div>
  <div id="lb"></div><div id="rb"></div>
  <div id="menu"><span style="left:5.5px">File</span><span style="left:33.5px">Edit</span><span style="left:64px">Setup</span><span style="left:103.5px">Control</span><span style="left:150px">Window</span><span style="left:200px">Resize</span><span style="left:243.5px">Help</span></div>
  <div id="client"></div>
  <div id="sunk"></div><div id="sunkl"></div>
  <div id="term"><div class="tl">root@tmdxscbp6618x:~# cd TSWcommand</div><div class="tl">root@tmdxscbp6618x:~/TSWcommand# ls</div><div class="tl">tsw3725_SPI_commands.csv  tswconfig.dat</div><div class="tl">root@tmdxscbp6618x:~/TSWcommand# cd ..</div><div class="tl">root@tmdxscbp6618x:~# ls</div><div class="tl">LTE_GC_last    TSWcommand     WCDMA_GC_last</div><div class="tl">root@tmdxscbp6618x:~# cd WCDMA_GC_last</div><div class="tl">root@tmdxscbp6618x:~/WCDMA_GC_last# ls</div><div class="tl">HPM_2antx2x10LTE_4xWCDMA_ads4249_portAB_DAC3484_v10.tgtcfg</div><div class="tl">dpdbios6.bin</div><div class="tl">gc5330hostapp.dat</div><div class="tl">startupscript.dat</div><div class="tl">x.json</div><div class="tl">root@tmdxscbp6618x:~/WCDMA_GC_last# cd..</div><div class="tl">-sh: cd..: not found</div><div class="tl">root@tmdxscbp6618x:~/WCDMA_GC_last# cd ..</div><div class="tl">root@tmdxscbp6618x:~# cd LTE_GC_last/</div><div class="tl">root@tmdxscbp6618x:~/LTE_GC_last#</div><div class="tl">root@tmdxscbp6618x:~/LTE_GC_last#</div><div class="tl">root@tmdxscbp6618x:~/LTE_GC_last# ./startupscript.sh</div><div class="tl">./startupscript.sh: line 2: dspload: not found</div><div class="tl">./startupscript.sh: line 3: gcload: not found</div><div class="tl">./startupscript.sh: line 4: summer_gainw: not found</div><div class="tl">./startupscript.sh: line 6: summer_mapw: not found</div><div class="tl">./startupscript.sh: line 7: summer_mapw: not found</div><div class="tl">root@tmdxscbp6618x:~/LTE_GC_last#</div><div class="tl">root@tmdxscbp6618x:~/LTE_GC_last#</div><div class="tl">root@tmdxscbp6618x:~/LTE_GC_last#</div><div class="tl">root@tmdxscbp6618x:~/LTE_GC_last#</div><div class="tl">root@tmdxscbp6618x:~/LTE_GC_last# ls</div><div class="tl">HPM_2antx1x20LTE_v2.tgtcfg  gc5330hostapp.dat</div><div class="tl">dpd_cmd.log                 startupscript.dat</div><div class="tl">dpd_user.log                startupscript.sh</div><div class="tl">dpdbios6.bin                x.json</div><div class="tl">root@tmdxscbp6618x:~/LTE_GC_last# <span class="cur"></span></div></div>
  <div id="sb"><div class="sbtn" style="top:1px"><svg class="abs" style="left:0;top:0" width="13" height="14" viewBox="0 0 13 14"><path d="M2.900 8.800l3.600-3.600 3.600 3.600" fill="none" stroke="#4d6185" stroke-width="2"/></svg></div><div class="sbtn" style="top:387px;height:14px"><i style="left:3px;top:3px;width:7px;height:1px;background:#8eb0f8;box-shadow:0 2px 0 #8eb0f8,0 4px 0 #8eb0f8,0 6px 0 #8eb0f8"></i></div><div class="sbtn" style="top:404px"><svg class="abs" style="left:0;top:0" width="13" height="14" viewBox="0 0 13 14"><path d="M2.900 5.200l3.600 3.600 3.600-3.600" fill="none" stroke="#4d6185" stroke-width="2"/></svg></div></div>
  <div id="sbr"></div>
  <div id="bb"></div>
</div>

<!-- taskbar -->
<div id="task">
  <div id="start"><svg class="abs" style="left:8px;top:4px" width="24" height="22" viewBox="0 0 24 22">
<path d="M4 3.5C7 1.5 9.5 2 11.5 3.2L10 10.2C8 9 5.5 8.8 2.5 10.5Z" fill="#f0562c"/>
<path d="M12.8 3.8C15 5 17.5 5 20.5 3.2L19 10.2C16 12 13.5 11.8 11.3 10.8Z" fill="#7cc83c"/>
<path d="M2.2 11.8C5.2 10 7.8 10.4 9.7 11.5L8.2 18.5C6.2 17.4 3.7 17.2 0.7 18.8Z" fill="#3c84e8"/>
<path d="M11 12.2C13.2 13.3 15.7 13.3 18.7 11.6L17.2 18.6C14.2 20.3 11.7 20.1 9.5 19Z" fill="#f8c828"/>
</svg><div id="starttxt">start</div></div>
  <div id="goog"><span>Google</span></div>
  <div id="tbtn"><svg class="abs" style="left:11px;top:5px" width="17" height="16" viewBox="0 0 17 16"><rect x="0" y="0" width="12" height="10" fill="#111"/><rect x="1" y="1" width="10" height="8.5" fill="#c8c8c0"/><rect x="1.8" y="1.8" width="8.4" height="6.4" fill="#ffff10"/><text x="6" y="7" font-family="Liberation Sans,sans-serif" font-weight="bold" font-size="6.500" fill="#1018e8" stroke="#1018e8" stroke-width=".5" text-anchor="middle" textLength="7.600" lengthAdjust="spacingAndGlyphs">VT</text><polygon points="1.2,10 12.3,10 15.4,13.3 4.6,13.6" fill="#b4b4b0"/><polyline points="1,10.3 4.4,14.2 15.6,13.9" fill="none" stroke="#111" stroke-width="1.2"/></svg><span>COM4:115200baud - ...</span></div>
  <div id="srch"><span>Search Desktop</span></div>
  <div id="sbut"><svg class="abs" style="left:0;top:0" width="23" height="20" viewBox="0 0 23 20"><path d="M7 14.500l4-4" stroke="#2a4aa8" stroke-width="2.200" stroke-linecap="round"/><circle cx="13" cy="8" r="3.600" fill="#e8f4ff" stroke="#3a6ac8" stroke-width="1.500"/></svg></div>
  <div id="batt"><span>97%</span></div><div id="bnub"></div><svg class="abs" style="left:662px;top:8px" width="20" height="16" viewBox="0 0 20 16"><path d="M1 6.300h2.600q.9-3.800 5.400-3.800h3.500v10h-3.500q-4.500 0-5.400-3.800h-2.600z" fill="#111"/><rect x="12.400" y="4" width="5.200" height="2.200" fill="#111"/><rect x="12.400" y="9" width="5.200" height="2.200" fill="#111"/></svg>
  <div id="tray"><svg class="abs" style="left:0;top:0" width="327" height="30" viewBox="697 738 327 30">
<!-- 1 wireless -->
<rect x="708.5" y="747.3" width="7.2" height="6" fill="#2a2c5c"/><rect x="709.2" y="748" width="5.8" height="4.4" fill="#34366c"/>
<path d="M711 753.3h2.4l.6 2h-3.6z" fill="#8a8cc0"/><ellipse cx="712.2" cy="756.6" rx="3.8" ry="1.7" fill="#e4e0f4"/>
<path d="M716.5 747.6q1.6 1.8 0 4.4M718.7 746.3q2.6 3.2 0 7M721 745q3.6 4.6 0 9.4" fill="none" stroke="#7ce820" stroke-width="1.2" stroke-linecap="round"/>
<!-- 2 computer -->
<path d="M728 745.5h11.5l1.5 1v10.5l-1 1v2l-1 .8h-11.5l-1-.8v-3l1.5-1.5z" fill="#111"/>
<rect x="728.3" y="745.3" width="11" height="9.5" fill="#ece4c8"/><rect x="730" y="747.2" width="7.5" height="5.6" fill="#1018d8"/><rect x="731.3" y="748.2" width="1.4" height="1" fill="#30c8f0"/>
<path d="M727.2 756l1.2-1.2h11l1 1.2v3.4h-13.2z" fill="#ece4c8"/><rect x="729" y="757.6" width="1.2" height="1.2" fill="#20d020"/><rect x="733" y="757.6" width="5" height="1" fill="#222"/>
<!-- 3 network disconnected -->
<rect x="750" y="745.5" width="6.5" height="6" fill="#2a2c5c"/><rect x="744.5" y="748.5" width="7" height="6.4" fill="#2a2c5c"/><rect x="745.2" y="749.2" width="5.6" height="5" fill="#383a70"/>
<ellipse cx="747.5" cy="757.8" rx="3.6" ry="1.8" fill="#d4d4f0"/><ellipse cx="754" cy="755" rx="2.8" ry="1.4" fill="#b8b8e0"/>
<path d="M749.8 751.8l9 8M758.8 751.8l-9 8" stroke="#e81818" stroke-width="2.4" stroke-linecap="round"/>
<!-- 4 magnifier -->
<path d="M763.8 758.3l5-5" stroke="#1838b8" stroke-width="2.4" stroke-linecap="round"/><circle cx="763.7" cy="758.4" r="1" fill="#d0d8f0"/>
<circle cx="772.3" cy="750.2" r="5" fill="#dcecfc" stroke="#c0c8d8" stroke-width="1.2"/><circle cx="771" cy="749" r="2.4" fill="#f8fcff"/>
<!-- 5 navy satellite -->
<rect x="780" y="745" width="16" height="15.8" fill="#1a2a68"/>
<ellipse cx="788" cy="756.5" rx="7.4" ry="3.6" fill="none" stroke="#e8ecf8" stroke-width="1.2"/><ellipse cx="786.5" cy="756.8" rx="4.4" ry="2.2" fill="none" stroke="#e8ecf8" stroke-width="1.1"/>
<circle cx="785.2" cy="749.6" r="1.5" fill="#f0f0f8"/><path d="M785.2 750.5v3.2M782.5 755.5h5.5" stroke="#f0f0f8" stroke-width="1.4"/><path d="M780 759.5q8 2.4 16-1v2.3h-16z" fill="#e8ecf8"/>
<!-- 6 play/db -->
<rect x="798.6" y="745.6" width="15" height="15" fill="#fff" stroke="#111" stroke-width="1.3"/>
<path d="M800.4 746.8l5 4.4-5 4.6z" fill="#18e018"/><path d="M800.6 746.5v13" stroke="#111" stroke-width="1"/>
<path d="M805.5 751h7.5M805.5 751v9.5" stroke="#111" stroke-width="1.2"/><rect x="806.3" y="752" width="6" height="7.8" fill="#c8c8c8"/><ellipse cx="809.3" cy="752.3" rx="3" ry="1.1" fill="#e8e8e8" stroke="#666" stroke-width=".5"/><path d="M806.5 755.5h5.6M806.5 757.6h5.6" stroke="#888" stroke-width=".8"/>
<!-- 7 clapper -->
<rect x="816.6" y="745.6" width="15" height="15" fill="#fff" stroke="#111" stroke-width="1.3"/>
<path d="M818 750.8l10.5-5 1 2.2-10.5 5z" fill="#222"/><path d="M817.6 752.4h12v2.6h-12z" fill="#222"/><path d="M819.5 754.8l1.2-2.2M823 754.8l1.2-2.2M826.5 754.8l1.2-2.2M821.5 749.6l.2-1.8M825 748l.2-1.8" stroke="#fff" stroke-width="1"/>
<rect x="817.6" y="755.6" width="12.4" height="4.2" fill="#20c850"/>
<!-- 8 blue screen -->
<path d="M834.4 745.6l12.6-.4 2.4 12.8-12 2z" fill="#9a9a8a"/><path d="M835.6 746.6l10.8-.2 2 10.8-10.2 1.6z" fill="#1414e0"/>
<path d="M838 749h1M841 748.6h1M844 749h1M839.5 751.5h1M842.5 751.5h1M838.5 754h1M841.5 754.5h1M844.5 754h1M840 756.5h1M843.5 756.5h1" stroke="#8090ff" stroke-width="1"/>
<path d="M836 759.4l12-1.8" stroke="#555" stroke-width="1"/>
<!-- 9 signal -->
<rect x="852.6" y="745.6" width="15" height="15" fill="#fff" stroke="#111" stroke-width="1.3"/>
<path d="M853 752.5h4.5v-2h3.5v-2h3.5v-2.3h3v14.4h-14.5z" fill="#111"/>
<rect x="853.3" y="753.5" width="2.4" height="3.2" fill="#30d0e8"/><rect x="853.3" y="758" width="3" height="1" fill="#999"/>
<rect x="858.6" y="754" width="2.2" height="6" fill="#18d030"/><rect x="861.8" y="751" width="2.2" height="9" fill="#18d030"/><rect x="865" y="748" width="2.2" height="12" fill="#18d030"/>
<!-- 10 net X -->
<rect x="874" y="745.3" width="9" height="5.6" fill="#111"/><rect x="876" y="747" width="5" height="2.6" fill="#30c8f0"/><rect x="873" y="751" width="11" height="2.4" fill="#111"/>
<path d="M870 756.5h16" stroke="#b0a890" stroke-width="1.2"/><path d="M870 758.5h16" stroke="#111" stroke-width="1"/>
<path d="M875.5 757.5h6l1 2h-8z" fill="#f0e010"/>
<path d="M873.5 751l9 7.5M882.5 751l-9 7.5" stroke="#f01010" stroke-width="1.8"/>
<!-- 11 diamond -->
<rect x="888" y="745" width="16" height="16" fill="#000"/><path d="M888 745.4h16" stroke="#f01010" stroke-width="1"/><path d="M888 760.6h16" stroke="#10e010" stroke-width="1"/>
<path d="M888.4 754l8.6-8.4 6.6 8-7.6 6.8z" fill="#a0d8e8"/><path d="M888.8 754l8.2-8v8z" fill="#10e8f8"/><path d="M897 745.6v8.4h-7" fill="none" stroke="#1010f0" stroke-width="1.2"/><path d="M897 745.6l6.6 8-7.6 6.8" fill="none" stroke="#1010f0" stroke-width="1"/><path d="M888.6 754.2l7.2 6.4" stroke="#fff" stroke-width="1"/>
<!-- 12 speaker no -->
<circle cx="911.5" cy="750.5" r="4.6" fill="#8a8a8a"/><circle cx="910.5" cy="750.5" r="2.4" fill="#5a5a62"/><path d="M906.2 748l2-1.4v6l-2-1.2z" fill="#b8b8c0"/><circle cx="915" cy="749.5" r="3" fill="#7a7a7a"/>
<circle cx="916.4" cy="755.6" r="3.8" fill="#e83020"/><circle cx="916.4" cy="755.6" r="2.4" fill="#fff"/><path d="M914.6 753.9l3.6 3.4" stroke="#e83020" stroke-width="1.4"/>
<!-- 13 safely remove -->
<path d="M925 748.5l3-3.6 1 2 4.6-1.2-1 4-4.2 1.4.6 1.6z" fill="#30b828"/><path d="M929.6 749.5l1.2 4" stroke="#208020" stroke-width="1.2"/>
<path d="M927.5 755.5l7.5-3.8 2.4 3.4-7.4 4.2z" fill="#8a8a92"/><path d="M929.2 755.6l5.2-2.6 1 1.4-5.2 2.8z" fill="#3a3a6a"/>
<!-- 14 shield -->
<path d="M944 745.4h11.8v9.2q-.4 3.4-5.9 5.2-5.5-1.800-5.9-5.200z" fill="#e8c070"/><path d="M947 745.4v13M949.6 745.4v14M952.4 745.4v13" stroke="#f8e4b0" stroke-width="1.1"/><path d="M944 745.4h11.8" stroke="#b08838" stroke-width=".8"/>
<circle cx="953.3" cy="756.2" r="2.9" fill="#f4e810" stroke="#a09000" stroke-width=".5"/><path d="M953.3 754.2v2.4M953.3 757.6v.8" stroke="#222" stroke-width="1"/>
</svg><div id="clock">4:41 PM</div></div>
</div>

</body></html>
